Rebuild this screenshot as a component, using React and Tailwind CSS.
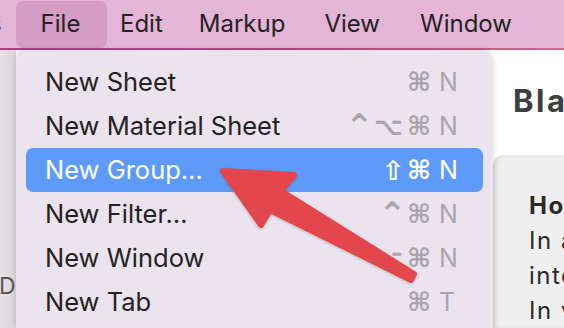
import React from "react";

const items = [
  { label: "New Sheet", mods: ["⌘"], key: "N" },
  { label: "New Material Sheet", mods: ["⌃", "⌥", "⌘"], key: "N" },
  { label: "New Group…", mods: ["⇧", "⌘"], key: "N", active: true },
  { label: "New Filter…", mods: ["⌃", "⌘"], key: "N" },
  { label: "New Window", mods: ["⌥", "⌘"], key: "N" },
  { label: "New Tab", mods: ["⌘"], key: "T" },
];

const font = { fontFamily: "Inter, 'Noto Sans', sans-serif" };
const symFont = { fontFamily: "'DejaVu Sans', sans-serif" };

const modCls = {
  "⌘": "w-[26px] text-[26px] text-center",
  "⌥": "w-[33px] text-[25px] text-left pl-[1px]",
  "⇧": "w-[26px] text-[27px] text-center",
  "⌃": "w-[28px] text-[34px] text-right pr-[3px]",
};

function Shortcut({ mods, k, active }) {
  return (
    <div className={`flex items-center ${active ? "text-white" : "text-[#a9a4ad]"}`}>
      {mods.map((m, i) => (
        <span key={i} className={`${modCls[m]} leading-none font-bold overflow-visible`} style={symFont}>
          {m}
        </span>
      ))}
      <span className="ml-[7px] w-[21px] text-[25px] leading-none">{k}</span>
    </div>
  );
}

export default function App() {
  return (
    <div className="relative w-[564px] h-[328px] overflow-hidden bg-white text-[#232323]" style={font}>
      {/* menu bar */}
      <div className="flex items-center h-[48px] bg-[#e4b5d7] text-[24px] overflow-hidden whitespace-nowrap">
        <span className="-ml-[11px] w-[15px] overflow-hidden">s</span>
        <span className="ml-[12px] w-[91px] h-[47px] rounded-[7px] bg-[#d39dc5] flex items-center justify-center pr-[2px]">File</span>
        <span className="ml-[13px]">Edit</span>
        <span className="ml-[36px]">Markup</span>
        <span className="ml-[39px]">View</span>
        <span className="ml-[40px]">Window</span>
      </div>
      <div className="h-[2px] bg-gradient-to-r from-[#b03f88] via-[#b84a86] to-[#cc6a84]" />

      <div className="flex h-[278px]">
        {/* left strip */}
        <div className="w-[16px] bg-gradient-to-r from-[#e6e3e6] to-[#d8d4d8] flex flex-col pt-[225px] overflow-hidden">
          <span className="text-[23px] text-[#555] leading-none -ml-[1px]">D</span>
        </div>

        {/* menu panel */}
        <div className="relative w-[477px] bg-[#ebe4ef] rounded-tr-[11px] rounded-tl-[10px] pt-[10px] px-[10px] shadow-[0_0_6px_rgba(0,0,0,0.15)] whitespace-nowrap">
          {items.map((it, i) => (
            <div
              key={i}
              className={`h-[44px] rounded-[7px] flex items-center justify-between pl-[19px] pr-[23px] text-[25.5px] ${
                it.active ? "bg-[#5e9bf8] text-white" : ""
              }`}
            >
              <span>{it.label}</span>
              <Shortcut mods={it.mods} k={it.key} active={it.active} />
            </div>
          ))}
        </div>

        {/* right content */}
        <div className="flex-1 flex flex-col bg-white overflow-hidden whitespace-nowrap">
          <div className="pl-[20px] pt-[28px] h-[125px] text-[31px] tracking-[2.5px] font-bold text-[#3e3e3e]">Bla</div>
          <div className="flex-1 bg-[#efefef] rounded-tl-[10px] shadow-[inset_4px_0_6px_-3px_rgba(0,0,0,0.15)] pl-[36px] pt-[33px] text-[24px] tracking-[1.5px] leading-[35px] text-[#2a2a2a]">
            <div className="font-bold">How</div>
            <div>In a</div>
            <div>inte</div>
            <div>In v</div>
          </div>
        </div>
      </div>

      {/* annotation arrow */}
      <svg className="absolute left-0 top-0 z-20 pointer-events-none" width="564" height="328" viewBox="0 0 564 328">
        <defs>
          <filter id="sh" x="-10%" y="-10%" width="120%" height="120%">
            <feDropShadow dx="0" dy="1" stdDeviation="1.5" floodColor="#000" floodOpacity="0.2" />
          </filter>
        </defs>
        <polygon
          points="223,171 294,175 281,191 414,274 411,280 270,210 261,225"
          fill="#e3474d"
          stroke="#e3474d"
          strokeWidth="6"
          strokeLinejoin="round"
          filter="url(#sh)"
        />
      </svg>
    </div>
  );
}
